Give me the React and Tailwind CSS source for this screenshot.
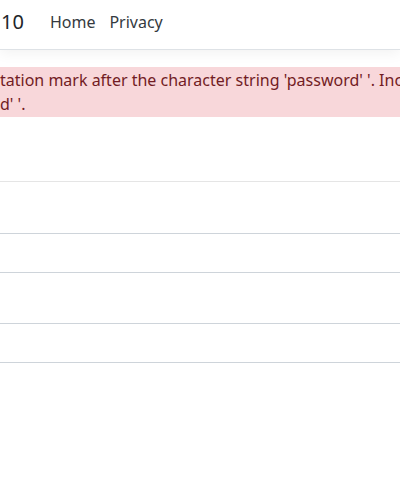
import React from 'react';

export default function App() {
    return (
        <div className="min-h-[480px] bg-white text-[#212529] font-['Segoe_UI','Noto_Sans',sans-serif] overflow-hidden">
            <header className="h-[50px] border-b border-[#dee2e6] shadow-[0_4px_12px_rgba(0,0,0,0.05)] flex items-center pb-[6px]">
                <span className="text-[20px] leading-none pl-[1px] text-[#212529]">10</span>
                <nav className="flex ml-[26px] gap-[14px] text-[16px]">
                    <a className="text-[#343a40]">Home</a>
                    <a className="text-[#343a40]">Privacy</a>
                </nav>
            </header>

            <div className="mt-[17px] h-[50px] bg-[#f8d7da] text-[#721c24] text-[16px] leading-[24px] pt-[1px] whitespace-nowrap overflow-hidden">
                <p>tation mark after the character string 'password' '. Incorrect syntax near</p>
                <p>d' '.</p>
            </div>

            <div className="mt-[64px] border-t border-[#e5e5e5]" />
            <div className="mt-[51px] h-[40px] border-y border-[#ced4da]" />
            <div className="mt-[50px] h-[40px] border-y border-[#ced4da]" />
        </div>
    );
}
